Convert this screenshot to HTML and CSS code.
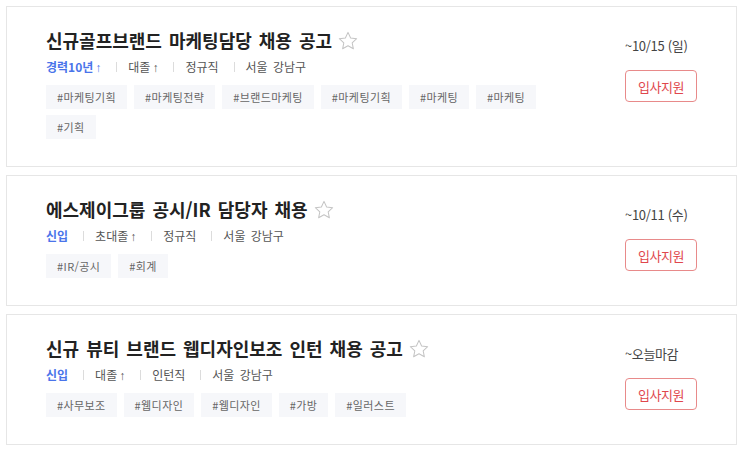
FILE: index.html
```html
<!DOCTYPE html>
<html lang="ko">
<head>
<meta charset="utf-8">
<title>채용 공고</title>
<link rel="stylesheet" href="styles.css">
</head>
<body>
<div class="list">
  <div class="card">
    <div class="info">
      <div class="title-row">
        <h2 class="title">신규골프브랜드 마케팅담당 채용 공고</h2>
        <svg class="star" viewBox="0 0 24 24"><path d="M12 2.6l2.85 6.05 6.6.78-4.88 4.55 1.3 6.52L12 17.25l-5.87 3.25 1.3-6.52-4.88-4.55 6.6-.78z"/></svg>
      </div>
      <div class="meta">
        <span class="career">경력10년<span class="arrow">↑</span></span><span class="sep"></span>
        <span class="item">대졸<span class="arrow">↑</span></span><span class="sep"></span>
        <span class="item">정규직</span><span class="sep"></span>
        <span class="item">서울 강남구</span>
      </div>
      <div class="tags">
        <span class="tag">#마케팅기획</span>
        <span class="tag">#마케팅전략</span>
        <span class="tag">#브랜드마케팅</span>
        <span class="tag">#마케팅기획</span>
        <span class="tag">#마케팅</span>
        <span class="tag">#마케팅</span>
        <span class="tag">#기획</span>
      </div>
    </div>
    <div class="side">
      <div class="date">~10/15 (일)</div>
      <button class="apply">입사지원</button>
    </div>
  </div>

  <div class="card">
    <div class="info">
      <div class="title-row">
        <h2 class="title">에스제이그룹 공시/IR 담당자 채용</h2>
        <svg class="star" viewBox="0 0 24 24"><path d="M12 2.6l2.85 6.05 6.6.78-4.88 4.55 1.3 6.52L12 17.25l-5.87 3.25 1.3-6.52-4.88-4.55 6.6-.78z"/></svg>
      </div>
      <div class="meta">
        <span class="career">신입</span><span class="sep"></span>
        <span class="item">초대졸<span class="arrow">↑</span></span><span class="sep"></span>
        <span class="item">정규직</span><span class="sep"></span>
        <span class="item">서울 강남구</span>
      </div>
      <div class="tags">
        <span class="tag">#IR/공시</span>
        <span class="tag">#회계</span>
      </div>
    </div>
    <div class="side">
      <div class="date">~10/11 (수)</div>
      <button class="apply">입사지원</button>
    </div>
  </div>

  <div class="card">
    <div class="info">
      <div class="title-row">
        <h2 class="title">신규 뷰티 브랜드 웹디자인보조 인턴 채용 공고</h2>
        <svg class="star" viewBox="0 0 24 24"><path d="M12 2.6l2.85 6.05 6.6.78-4.88 4.55 1.3 6.52L12 17.25l-5.87 3.25 1.3-6.52-4.88-4.55 6.6-.78z"/></svg>
      </div>
      <div class="meta">
        <span class="career">신입</span><span class="sep"></span>
        <span class="item">대졸<span class="arrow">↑</span></span><span class="sep"></span>
        <span class="item">인턴직</span><span class="sep"></span>
        <span class="item">서울 강남구</span>
      </div>
      <div class="tags">
        <span class="tag">#사무보조</span>
        <span class="tag">#웹디자인</span>
        <span class="tag">#웹디자인</span>
        <span class="tag">#가방</span>
        <span class="tag">#일러스트</span>
      </div>
    </div>
    <div class="side">
      <div class="date date-today">~오늘마감</div>
      <button class="apply">입사지원</button>
    </div>
  </div>
</div>
</body>
</html>
```

FILE: styles.css
```css
* {
  box-sizing: border-box;
}

body {
  margin: 0;
  padding: 6px;
  background: #ffffff;
  font-family: "Noto Sans CJK KR", "Noto Sans", sans-serif;
  color: #333;
}

.list {
  display: flex;
  flex-direction: column;
  gap: 8px;
}

.card {
  display: flex;
  align-items: flex-start;
  border: 1px solid #e6e6e6;
  background: #fff;
  padding: 21px 39px 27px 39px;
}

.info {
  flex: 1;
  min-width: 0;
  max-width: 540px;
}

.title-row {
  display: flex;
  align-items: center;
  height: 24px;
}

.title {
  margin: 0;
  font-size: 18px;
  line-height: 24px;
  font-weight: 700;
  color: #222;
  letter-spacing: 0;
  word-spacing: 2px;
  white-space: nowrap;
}

.star {
  width: 22px;
  height: 22px;
  margin-left: 5px;
  margin-top: 2px;
  flex: none;
}

.star path {
  fill: none;
  stroke: #c4c4c4;
  stroke-width: 1.1;
  stroke-linejoin: round;
}

.meta {
  display: flex;
  align-items: center;
  margin-top: 6px;
  height: 18px;
  font-size: 12px;
  line-height: 18px;
  word-spacing: 2px;
  color: #555;
  white-space: nowrap;
}

.career {
  color: #4a74ea;
  font-weight: 700;
}

.arrow {
  font-family: "Liberation Sans", sans-serif;
  margin-left: 2px;
}

.sep {
  width: 1px;
  height: 10px;
  background: #dcdcdc;
  margin: 0 11px 0 15px;
}

.tags {
  display: flex;
  flex-wrap: wrap;
  gap: 6px 7px;
  margin-top: 9px;
}

.tag {
  height: 24px;
  line-height: 24px;
  padding: 0 11px;
  font-size: 11px;
  letter-spacing: 0.4px;
  color: #666;
  background: #f6f7fa;
  white-space: nowrap;
}

.side {
  width: 72px;
  margin-left: auto;
  padding-top: 8px;
  display: flex;
  flex-direction: column;
  flex: none;
}

.date {
  font-size: 13px;
  line-height: 20px;
  color: #444;
  white-space: nowrap;
  letter-spacing: -0.3px;
}

.date-today {
  letter-spacing: -0.4px;
}

.apply {
  margin-top: 14px;
  width: 72px;
  height: 32px;
  padding: 0;
  border: 1px solid #e88a8a;
  border-radius: 4px;
  background: #fff;
  color: #e0474c;
  font-family: "Noto Sans CJK KR", "Noto Sans", sans-serif;
  font-size: 13px;
  letter-spacing: -0.5px;
  cursor: pointer;
}
```
